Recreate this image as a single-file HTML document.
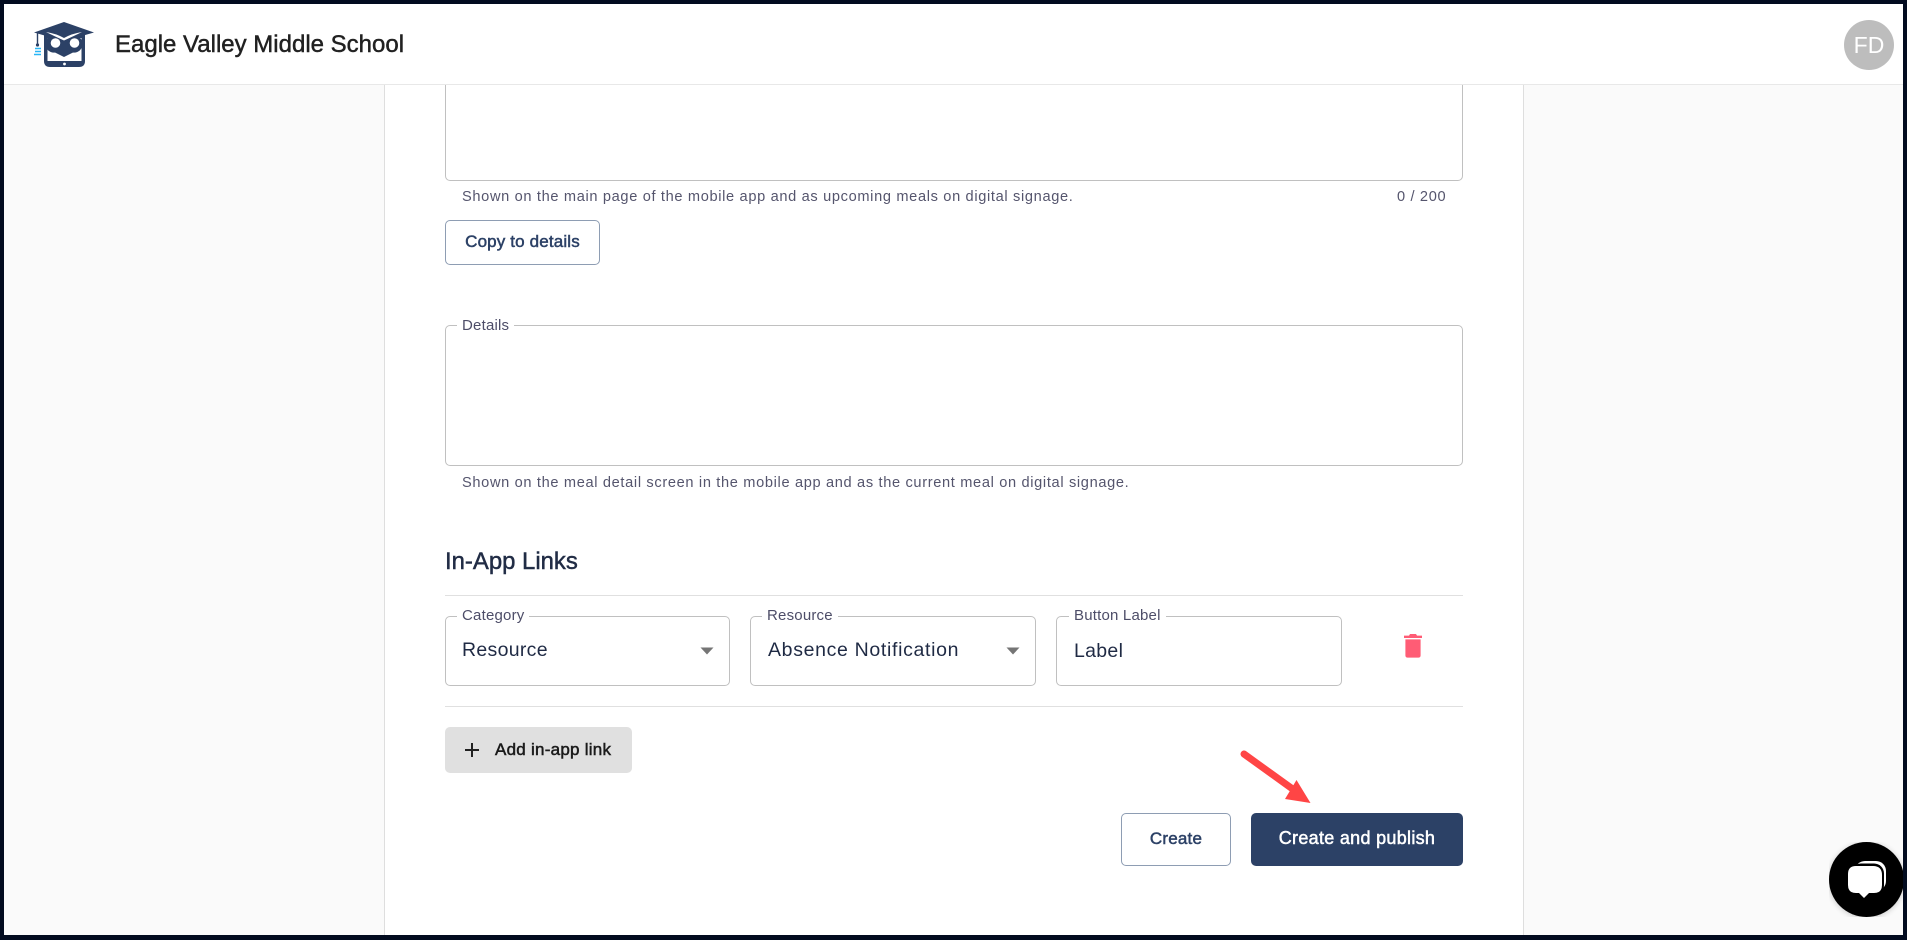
<!DOCTYPE html>
<html lang="en">
<head>
<meta charset="utf-8">
<title>Eagle Valley Middle School</title>
<style>
html,body{margin:0;padding:0;width:1907px;height:940px;overflow:hidden;background:#020b1f;}
body{font-family:"Liberation Sans",sans-serif;position:relative;}
#app{position:absolute;left:4px;top:4px;width:1899px;height:931px;background:#fafafa;overflow:hidden;}
.a{position:absolute;white-space:nowrap;line-height:1;}
.box{position:absolute;box-sizing:border-box;border:1px solid #c0c0c0;border-radius:5px;background:#fff;}
.leg{position:absolute;background:#fff;white-space:nowrap;font-size:15px;line-height:18px;color:#4d4d68;padding:0 5px;letter-spacing:.2px;}
.help{position:absolute;white-space:nowrap;font-size:14.6px;line-height:18px;color:#55556d;letter-spacing:.66px;}
.hr{position:absolute;height:1px;background:#e0e0e0;}
.btn{position:absolute;box-sizing:border-box;border-radius:5px;display:flex;align-items:center;justify-content:center;white-space:nowrap;font-size:17px;-webkit-text-stroke:.5px currentColor;}
.out{border:1px solid #8e9db3;color:#2c4166;background:#fff;}
</style>
</head>
<body>
<div id="app"></div>

<!-- header -->
<div class="a" style="left:4px;top:4px;width:1899px;height:80px;background:#fff;"></div>
<div class="a" style="left:4px;top:84px;width:1899px;height:1px;background:#e8e8e8;"></div>

<!-- card -->
<div class="a" style="left:384px;top:85px;width:1140px;height:850px;box-sizing:border-box;background:#fff;border-left:1px solid #dedede;border-right:1px solid #dedede;"></div>

<!-- logo -->
<svg class="a" style="left:30px;top:18px" width="68" height="52" viewBox="30 18 68 52">
  <path d="M44 34H85V61Q85 67 79 67H50Q44 67 44 61Z" fill="#2c4166"/>
  <path d="M47.5 38H81.5V61H47.5Z" fill="#fff"/>
  <path d="M34 32.5L64 22L94 32.5L64 41Z" fill="#2c4166"/>
  <circle cx="54" cy="44" r="8.6" fill="#2c4166"/>
  <circle cx="74" cy="44" r="8.6" fill="#2c4166"/>
  <path d="M50 36H78V50L64 57L50 50Z" fill="#2c4166"/>
  <path d="M46 32Q56 33.5 64 38Q72 33.5 82 32Q74 36 64 40.5Q54 36 46 32Z" fill="#fff"/>
  <circle cx="55.5" cy="43" r="4.8" fill="#fff"/>
  <circle cx="74.5" cy="43" r="4.8" fill="#fff"/>
  <circle cx="64.5" cy="64" r="1.4" fill="#fff"/>
  <path d="M37.5 33V44" stroke="#2c4166" stroke-width="1.4"/>
  <circle cx="37.5" cy="45" r="1.6" fill="#2c4166"/>
  <path d="M35 48.5H41M35 51.5H41M34 54.5H41" stroke="#29b6f6" stroke-width="1.6"/>
</svg>
<div class="a" style="left:115px;top:33px;font-size:24px;color:#212121;-webkit-text-stroke:.45px #212121;">Eagle Valley Middle School</div>

<!-- avatar -->
<div class="a" style="left:1844px;top:20px;width:50px;height:50px;border-radius:50%;background:#bdbdbd;color:#fff;font-size:23px;line-height:50px;text-align:center;">FD</div>

<!-- textarea 1 -->
<div class="box" style="left:445px;top:85px;width:1018px;height:96px;border-top:none;border-radius:0 0 5px 5px;"></div>
<div class="help" style="left:462px;top:188px;">Shown on the main page of the mobile app and as upcoming meals on digital signage.</div>
<div class="help" style="left:1397px;top:188px;">0 / 200</div>

<div class="btn out" style="left:445px;top:220px;width:155px;height:45px;padding-bottom:2px;letter-spacing:.15px;">Copy to details</div>

<!-- details -->
<div class="box" style="left:445px;top:325px;width:1018px;height:141px;"></div>
<div class="leg" style="left:457px;top:317px;">Details</div>
<div class="help" style="left:462px;top:474px;">Shown on the meal detail screen in the mobile app and as the current meal on digital signage.</div>

<!-- In-App Links -->
<div class="a" style="left:445px;top:550px;font-size:23.9px;color:#212c45;-webkit-text-stroke:.45px #212c45;">In-App Links</div>
<div class="hr" style="left:445px;top:595px;width:1018px;"></div>

<div class="box" style="left:445px;top:616px;width:285px;height:70px;"></div>
<div class="leg" style="left:457px;top:607px;">Category</div>
<div class="a" style="left:462px;top:641px;font-size:19.5px;color:#1f2a44;letter-spacing:.3px;">Resource</div>
<svg class="a" style="left:700px;top:647px" width="14" height="8"><path d="M0.5 0.5H13.5L7 7.5Z" fill="#757575"/></svg>

<div class="box" style="left:750px;top:616px;width:286px;height:70px;"></div>
<div class="leg" style="left:762px;top:607px;">Resource</div>
<div class="a" style="left:768px;top:641px;font-size:19.5px;color:#1f2a44;letter-spacing:.67px;">Absence Notification</div>
<svg class="a" style="left:1006px;top:647px" width="14" height="8"><path d="M0.5 0.5H13.5L7 7.5Z" fill="#757575"/></svg>

<div class="box" style="left:1056px;top:616px;width:286px;height:70px;"></div>
<div class="leg" style="left:1069px;top:607px;">Button Label</div>
<div class="a" style="left:1074px;top:642px;font-size:19.5px;color:#1f2a44;letter-spacing:.3px;">Label</div>

<svg class="a" style="left:1404px;top:634px" width="18" height="24" viewBox="0 0 18 24">
  <path d="M6 0H12L13 1.6H18V4H0V1.6H5Z" fill="#ff5c75"/>
  <path d="M1.4 5.4H16.6V21.4Q16.6 23.6 14.4 23.6H3.6Q1.4 23.6 1.4 21.4Z" fill="#ff5c75"/>
</svg>

<div class="hr" style="left:445px;top:706px;width:1018px;"></div>

<div class="btn" style="left:445px;top:727px;width:187px;height:46px;background:#e0e0e0;color:#1a1a1a;justify-content:flex-start;padding-left:50px;letter-spacing:.25px;">Add in-app link</div>
<svg class="a" style="left:464px;top:742px" width="16" height="16"><path d="M8 1V15M1 8H15" stroke="#212121" stroke-width="2"/></svg>

<div class="btn out" style="left:1121px;top:813px;width:110px;height:53px;padding-bottom:2px;letter-spacing:.2px;">Create</div>
<div class="btn" style="left:1251px;top:813px;width:212px;height:53px;padding-bottom:2px;background:#2c4166;color:#fff;font-size:18px;letter-spacing:.3px;">Create and publish</div>

<!-- red arrow -->
<svg class="a" style="left:1235px;top:745px" width="85" height="65" viewBox="1235 745 85 65">
  <path d="M1244 754L1294 790" stroke="#ff4545" stroke-width="7" stroke-linecap="round"/>
  <path d="M1296.5 780L1310.5 803L1285 799Z" fill="#ff4545"/>
</svg>

<!-- chat widget -->
<div class="a" style="left:1829px;top:842px;width:74px;height:75px;overflow:hidden;">
  <div style="position:absolute;left:0;top:0;width:75px;height:75px;border-radius:50%;background:#000;box-shadow:0 1px 6px rgba(0,0,0,.2);"></div>
</div>
<svg class="a" style="left:1844px;top:858px" width="46" height="44" viewBox="1844 858 46 44">
  <rect x="1855" y="861" width="31" height="30" rx="10" fill="#fff"/>
  <rect x="1851" y="863.5" width="33" height="32" rx="10" fill="#000"/>
  <path d="M1856 866H1873Q1882 866 1882 875V885Q1882 893 1874 893H1869L1864 898L1859 893H1856Q1848 893 1848 885V874Q1848 866 1856 866Z" fill="#fff"/>
</svg>
</body>
</html>
